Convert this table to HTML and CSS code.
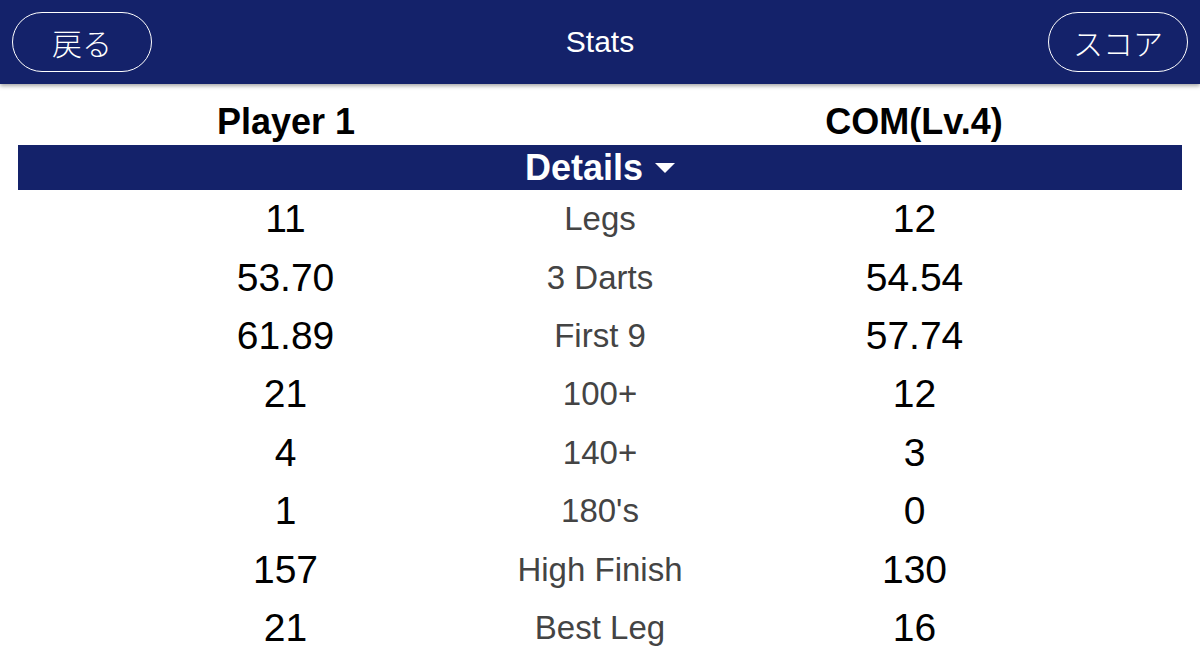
FILE: index.html
```html
<!DOCTYPE html>
<html lang="ja">
<head>
<meta charset="utf-8">
<link rel="stylesheet" href="styles.css">
</head>
<body>
<header class="topbar">
  <button class="pill">戻る</button>
  <div class="title">Stats</div>
  <button class="pill">スコア</button>
</header>
<main class="content">
  <div class="players">
    <div class="pname">Player 1</div>
    <div></div>
    <div class="pname">COM(Lv.4)</div>
  </div>
  <div class="details-bar">
    <span>Details</span>
    <span class="tri"></span>
  </div>
  <div class="table">
    <div class="v">11</div><div class="l">Legs</div><div class="v">12</div>
    <div class="v">53.70</div><div class="l">3 Darts</div><div class="v">54.54</div>
    <div class="v">61.89</div><div class="l">First 9</div><div class="v">57.74</div>
    <div class="v">21</div><div class="l">100+</div><div class="v">12</div>
    <div class="v">4</div><div class="l">140+</div><div class="v">3</div>
    <div class="v">1</div><div class="l">180's</div><div class="v">0</div>
    <div class="v">157</div><div class="l">High Finish</div><div class="v">130</div>
    <div class="v">21</div><div class="l">Best Leg</div><div class="v">16</div>
  </div>
</main>
</body>
</html>
```
FILE: styles.css
```css
* { box-sizing: border-box; }
html, body { margin: 0; padding: 0; background: #fff; }
body {
  font-family: "Liberation Sans", Arial, "Noto Sans CJK JP", sans-serif;
  width: 1200px;
  height: 671px;
  overflow: hidden;
}
.topbar {
  height: 84px;
  background: #14226a;
  display: flex;
  align-items: center;
  justify-content: space-between;
  padding: 0 12px;
  box-shadow: 0 2px 4px rgba(0,0,0,0.35);
  position: relative;
  z-index: 1;
}
.pill {
  width: 140px;
  height: 60px;
  border: 1.5px solid #fff;
  border-radius: 30px;
  background: transparent;
  color: #fff;
  font-family: "Noto Sans CJK JP", sans-serif;
  font-size: 30px;
  font-weight: 300;
  padding: 0;
  line-height: 1;
}
.title {
  color: #fff;
  font-size: 30px;
}
.content {
  padding: 0 18px;
}
.players {
  display: grid;
  grid-template-columns: 314px 314px 314px;
  justify-content: center;
  height: 61px;
  align-items: end;
  padding-bottom: 2px;
}
.pname {
  text-align: center;
  font-weight: bold;
  font-size: 36px;
  color: #000;
}
.details-bar {
  height: 45px;
  background: #14226a;
  color: #fff;
  font-weight: bold;
  font-size: 36px;
  display: flex;
  align-items: center;
  justify-content: center;
  gap: 12px;
}
.tri {
  width: 0;
  height: 0;
  border-left: 10px solid transparent;
  border-right: 10px solid transparent;
  border-top: 10px solid #fff;
}
.table {
  display: grid;
  grid-template-columns: 314px 315px 314px;
  justify-content: center;
  grid-auto-rows: 58.4px;
  align-items: center;
  padding-top: 0;
}
.v {
  text-align: center;
  font-size: 39px;
  color: #000;
}
.l {
  text-align: center;
  font-size: 33px;
  color: #444;
}
```
